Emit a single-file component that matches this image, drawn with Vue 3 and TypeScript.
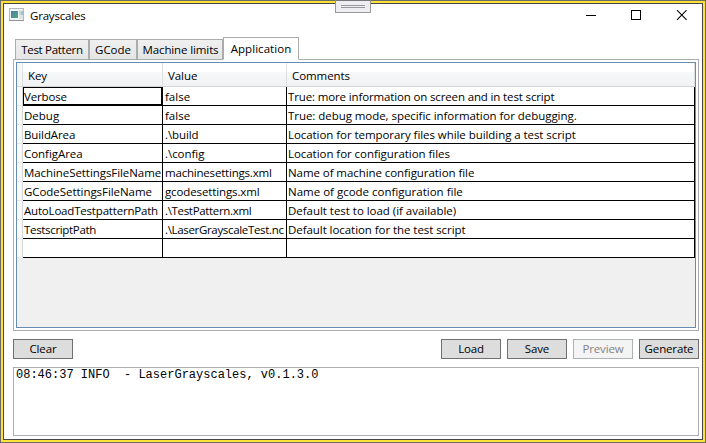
<script setup lang="ts">
interface Tab {
  label: string
  tracking: number
}

interface Setting {
  key: string
  value: string
  comment: string
  tracking: [number, number, number]
}

const tabs: Tab[] = [
  { label: 'Test Pattern', tracking: -0.3 },
  { label: 'GCode', tracking: -0.05 },
  { label: 'Machine limits', tracking: -0.12 },
  { label: 'Application', tracking: 0.05 },
]
const activeTab = 'Application'

const settings: Setting[] = [
  { key: 'Verbose', value: 'false', comment: 'True: more information on screen and in test script', tracking: [-0.15, 0, -0.14] },
  { key: 'Debug', value: 'false', comment: 'True: debug mode, specific information for debugging.', tracking: [0, 0, -0.05] },
  { key: 'BuildArea', value: '.\\build', comment: 'Location for temporary files while building a test script', tracking: [-0.1, -0.1, -0.06] },
  { key: 'ConfigArea', value: '.\\config', comment: 'Location for configuration files', tracking: [-0.05, -0.05, -0.05] },
  { key: 'MachineSettingsFileName', value: 'machinesettings.xml', comment: 'Name of machine configuration file', tracking: [-0.07, -0.2, -0.07] },
  { key: 'GCodeSettingsFileName', value: 'gcodesettings.xml', comment: 'Name of gcode configuration file', tracking: [-0.05, -0.12, 0] },
  { key: 'AutoLoadTestpatternPath', value: '.\\TestPattern.xml', comment: 'Default test to load (if available)', tracking: [-0.19, -0.33, -0.03] },
  { key: 'TestscriptPath', value: '.\\LaserGrayscaleTest.nc', comment: 'Default location for the test script', tracking: [-0.33, -0.33, -0.06] },
  { key: '', value: '', comment: '', tracking: [0, 0, 0] },
]

const spacing = (px: number) => ({ letterSpacing: `${px}px` })

const log = '08:46:37 INFO  - LaserGrayscales, v0.1.3.0'
</script>

<template>
  <div class="frame">
    <div class="accent">
      <main class="window">
        <header class="titlebar">
          <svg class="app-icon" width="16" height="14" viewBox="0 0 16 14">
            <defs>
              <linearGradient id="pane" x1="0" y1="0" x2="1" y2="1">
                <stop offset="0" stop-color="#4a7fa8" />
                <stop offset="1" stop-color="#4fa878" />
              </linearGradient>
            </defs>
            <rect x="0.5" y="0.5" width="14" height="12" fill="#f3f4f5" stroke="#b4b8bb" />
            <rect x="0" y="12" width="15" height="1" fill="#8e9499" />
            <rect x="2" y="3" width="7" height="7" fill="url(#pane)" />
            <rect x="10" y="2" width="4" height="9" fill="#dde6e6" />
            <rect x="12" y="3" width="2" height="4" fill="#a3bfda" />
            <rect x="10" y="3" width="2" height="4" fill="#c5dcd6" />
          </svg>
          <span class="title">Grayscales</span>
          <svg class="controls" width="103" height="12" viewBox="0 0 103 12">
            <path d="M0 5.5H10" stroke="#000" />
            <rect x="45.5" y="0.5" width="9" height="9" fill="none" stroke="#000" />
            <path d="M91 0.2L100.6 9.8M100.6 0.2L91 9.8" stroke="#000" stroke-width="1.1" />
          </svg>
        </header>

        <nav class="tabs">
          <div
            v-for="tab in tabs"
            :key="tab.label"
            class="tab"
            :class="{ active: tab.label === activeTab }"
            :style="spacing(tab.tracking)"
          >
            <span>{{ tab.label }}</span>
          </div>
        </nav>

        <section class="panel">
          <div class="grid">
            <div class="row head">
              <div class="gutter"></div>
              <div class="th">Key</div>
              <div class="th">Value</div>
              <div class="th">Comments</div>
            </div>
            <div v-for="(s, i) in settings" :key="i" class="row">
              <div class="gutter"></div>
              <div class="td" :class="{ selected: i === 0 }" :style="spacing(s.tracking[0])">{{ s.key }}</div>
              <div class="td value" :style="spacing(s.tracking[1])">{{ s.value }}</div>
              <div class="td" :style="spacing(s.tracking[2])">{{ s.comment }}</div>
            </div>
          </div>
        </section>

        <div class="actions">
          <button class="btn">Clear</button>
          <span class="spacer"></span>
          <button class="btn">Load</button>
          <button class="btn">Save</button>
          <button class="btn" disabled>Preview</button>
          <button class="btn">Generate</button>
        </div>

        <pre class="log">{{ log }}</pre>
      </main>
    </div>
    <div class="handle"><i></i><i></i></div>
  </div>
</template>

<style>
body {
  margin: 0;
  overflow: hidden;
}
</style>

<style scoped>
* {
  box-sizing: border-box;
}
.frame {
  position: relative;
  width: 706px;
  height: 443px;
  border: 1px solid #6b6b68;
  font-family: 'Open Sans', 'Noto Sans', sans-serif;
  font-size: 11.5px;
  color: #000;
}
.accent {
  height: 100%;
  border: 2px solid #ffe137;
}
.window {
  display: flex;
  flex-direction: column;
  height: 100%;
  padding: 0 3px 3px 9px;
  border: 1px solid #46464a;
  background: #fff;
}
.titlebar {
  display: flex;
  align-items: flex-start;
  height: 33px;
  margin-left: -4px;
}
.app-icon {
  margin-top: 4px;
}
.title {
  margin-left: 5px;
  letter-spacing: -0.2px;
  line-height: 23px;
}
.controls {
  margin: 6px 10px 0 auto;
}
.tabs {
  display: flex;
  align-items: flex-end;
  height: 23px;
  margin-bottom: -1px;
  padding-left: 2px;
}
.tab {
  display: flex;
  justify-content: center;
  width: 74px;
  height: 21px;
  border: 1px solid #acacac;
  background: linear-gradient(#f0f0f0, #e5e5e5);
  line-height: 20px;
  white-space: nowrap;
}
.tab:nth-child(2) {
  width: 48px;
}
.tab:nth-child(3) {
  width: 86px;
  padding-left: 1px;
}
.tab.active {
  z-index: 1;
  width: 76px;
  height: 23px;
  border-bottom-color: #fff;
  background: #fff;
  line-height: 22px;
}
.panel {
  height: 272px;
  padding: 2px;
  border: 1px solid #acacac;
}
.grid {
  height: 266px;
  border: 1px solid #688caf;
  background: #f0f0f0;
}
.row {
  display: grid;
  grid-template-columns: 6px 140px 124px 408px;
  grid-template-rows: 100%;
  height: 19px;
}
.head {
  height: 24px;
  border-bottom: 1px solid #d5d5d5;
  background: linear-gradient(#fff 0, #fff 40%, #f7f8fa 41%, #f1f2f4 100%);
}
.th {
  padding-left: 5px;
  border-right: 1px solid #dedfe1;
  letter-spacing: -0.08px;
  line-height: 25px;
}
.gutter {
  border-right: 1px solid #d5d5d5;
  border-bottom: 1px solid #e6e7ea;
  background: #f8f9fb;
}
.head .gutter {
  border-bottom: 0;
  border-right-color: #dedfe1;
  background: linear-gradient(90deg, #f0f1f3, #fafafa);
}
.td {
  padding-left: 1px;
  border-right: 1px solid #000;
  border-bottom: 1px solid #000;
  background: #fff;
  line-height: 19px;
  white-space: nowrap;
}
.td.value {
  padding-left: 2px;
}
.td.selected {
  box-shadow: inset 1px 1px #000, inset -1px -1px #000;
}
.actions {
  display: flex;
  gap: 6px;
  margin: 8px 0;
}
.spacer {
  flex: 1;
}
.btn {
  width: 60px;
  height: 20px;
  padding: 0;
  border: 1px solid #707070;
  background: #ddd;
  color: #000;
  font: inherit;
  letter-spacing: -0.15px;
  line-height: 18px;
}
.btn:disabled {
  border-color: #adb2b5;
  background: #f4f4f4;
  color: #838383;
}
.log {
  flex: 1;
  margin: 0;
  padding: 0 2px;
  border: 1px solid #abadb3;
  font: 12px/15px 'Liberation Mono', monospace;
}
.handle {
  position: absolute;
  top: -1px;
  left: 334px;
  display: flex;
  flex-direction: column;
  align-items: center;
  gap: 1px;
  width: 36px;
  height: 13px;
  padding-top: 4px;
  border: 1px solid #99999c;
  border-top-color: #77777a;
  background: #eeeef2;
}
.handle i {
  width: 24px;
  height: 1px;
  background: #99999c;
}
</style>
